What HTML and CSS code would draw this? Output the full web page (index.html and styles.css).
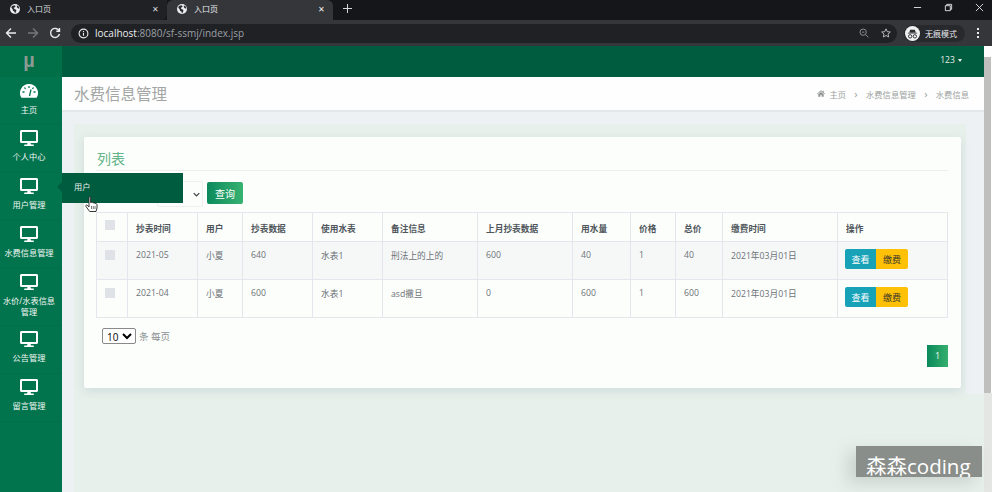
FILE: index.html
```html
<!DOCTYPE html>
<html lang="en">
<head>
    <meta charset="UTF-8">
    <meta name="viewport" content="width=device-width, initial-scale=1.0">
    <title>入口页</title>
    <link rel="stylesheet" href="styles.css">
</head>
<body>

    <svg class="defs" width="0" height="0">
        <symbol id="desktop" viewBox="0 0 576 512">
            <path d="M528 0H48C21.5 0 0 21.5 0 48v320c0 26.5 21.5 48 48 48h192l-16 48h-72c-13.3 0-24 10.7-24 24s10.7 24 24 24h272c13.3 0 24-10.7 24-24s-10.7-24-24-24h-72l-16-48h192c26.5 0 48-21.5 48-48V48c0-26.5-21.5-48-48-48zm-16 352H64V64h448v288z"/>
        </symbol>
        <symbol id="globe" viewBox="0 0 16 16">
            <circle cx="8" cy="8" r="8" fill="#eceff1"/>
            <path d="M3 3l4-1 2 1-1 2-2 1 1 2 3 1 0 3-2 3-1-3-2-1-1-3-2-2zM11 2l3 2 1 3-2 0-2-2z" fill="#2b2c30"/>
        </symbol>
    </svg>

    <!-- browser tabs -->
    <div class="tabstrip">
        <div class="tab">
            <svg class="tab-icon"><use href="#globe"/></svg>
            <span class="tab-title">入口页</span>
            <span class="tab-close">✕</span>
        </div>
        <div class="tab tab-active">
            <svg class="tab-icon"><use href="#globe"/></svg>
            <span class="tab-title">入口页</span>
            <span class="tab-close">✕</span>
        </div>
        <svg class="new-tab" viewBox="0 0 10 10"><path d="M5 0v10M0 5h10"/></svg>
        <div class="win-controls">
            <svg viewBox="0 0 10 10"><path d="M1 5h8"/></svg>
            <svg viewBox="0 0 10 10"><path d="M1.500 3h5.500v5.500h-5.500zM3 3v-1.500h5.500v5.500h-1.500"/></svg>
            <svg viewBox="0 0 10 10"><path d="M1 1l8 8M9 1l-8 8"/></svg>
        </div>
    </div>

    <!-- browser toolbar -->
    <div class="toolbar">
        <svg class="nav-icon" viewBox="0 0 12 12"><path d="M11 6H1.500M6 1.500L1.500 6 6 10.500"/></svg>
        <svg class="nav-icon nav-off" viewBox="0 0 12 12"><path d="M1 6h9.500M6 1.500L10.500 6 6 10.500"/></svg>
        <svg class="nav-icon" viewBox="0 0 12 12"><path d="M10.200 4A4.500 4.500 0 1 0 10.500 7M10.500 1v3.200H7.300"/></svg>
        <div class="omnibox">
            <svg class="info-icon" viewBox="0 0 12 12"><circle cx="6" cy="6" r="4.800"/><path d="M6 5.500v3M6 3.300v1.200"/></svg>
            <span class="url"><b>localhost</b>:8080/sf-ssmj/index.jsp</span>
            <svg class="omni-icon omni-zoom" viewBox="0 0 12 12"><circle cx="5" cy="5" r="3.800"/><path d="M3.500 5h3M8 8l3.300 3.300"/></svg>
            <svg class="omni-icon" viewBox="0 0 12 12"><path d="M6 1l1.500 3.400 3.700.4-2.800 2.400.8 3.600L6 9l-3.200 1.800.8-3.600L.8 4.800l3.700-.4z"/></svg>
        </div>
        <div class="incognito">
            <span class="incognito-avatar">
                <svg viewBox="0 0 16 16"><path d="M4.500 7l1-3h5l1 3zM3 7.300h10v.8H3z" fill="#2b2c30"/><circle cx="5.500" cy="11" r="1.800" fill="none" stroke="#2b2c30"/><circle cx="10.500" cy="11" r="1.800" fill="none" stroke="#2b2c30"/></svg>
            </span>
            <span>无痕模式</span>
        </div>
        <div class="menu-dots"><i></i><i></i><i></i></div>
    </div>

    <div class="app">
        <!-- sidebar -->
        <div class="sidebar">
            <div class="logo">µ</div>
            <a class="side-item side-home">
                <svg class="side-icon gauge" viewBox="0 0 18 14">
                    <path d="M9 0a9 9 0 0 1 7.600 13.800H1.400A9 9 0 0 1 9 0z" fill="#fff"/>
                    <path d="M9 2v2M4.500 3.500l1 1.500M13.500 3.500l-1 1.500M2.500 8h2M13.500 8h2M9.500 12L11 5.500" stroke="#02744d" stroke-width="1.300"/>
                </svg>
                <span>主页</span>
            </a>
            <a class="side-item"><svg class="side-icon"><use href="#desktop"/></svg><span>个人中心</span></a>
            <a class="side-item"><svg class="side-icon"><use href="#desktop"/></svg><span>用户管理</span></a>
            <a class="side-item"><svg class="side-icon"><use href="#desktop"/></svg><span>水费信息管理</span></a>
            <a class="side-item side-tall"><svg class="side-icon"><use href="#desktop"/></svg><span>水价/水表信息管理</span></a>
            <a class="side-item"><svg class="side-icon"><use href="#desktop"/></svg><span>公告管理</span></a>
            <a class="side-item"><svg class="side-icon"><use href="#desktop"/></svg><span>留言管理</span></a>
        </div>

        <div class="main">
            <div class="topbar">
                <span class="user-menu">123 <i class="caret"></i></span>
            </div>

            <div class="title-bar">
                <h1>水费信息管理</h1>
                <div class="breadcrumb">
                    <svg class="home-icon" viewBox="0 0 12 10"><path d="M6 0L0 5.200l.7.800L6 1.500 11.300 6l.7-.8-2-1.700V1H8.500v1.200zM2 6.200V10h3V7h2v3h3V6.200L6 2.800z"/></svg>
                    <span>主页</span>
                    <span class="sep">›</span>
                    <span>水费信息管理</span>
                    <span class="sep">›</span>
                    <span>水费信息</span>
                </div>
            </div>

            <div class="content">
                <div class="card">
                    <h2>列表</h2>
                    <div class="search-row">
                        <div class="fake-select"><svg viewBox="0 0 10 6"><path d="M1 1l4 4 4-4"/></svg></div>
                        <button class="btn-search">查询</button>
                    </div>

                    <table class="data-table">
                        <colgroup>
                            <col class="c-check"><col class="c-wide"><col class="c-user"><col class="c-wide"><col class="c-wide">
                            <col class="c-note"><col class="c-note"><col class="c-water"><col class="c-user"><col class="c-total">
                            <col class="c-date"><col class="c-ops">
                        </colgroup>
                        <thead>
                            <tr>
                                <th><span class="check"></span></th>
                                <th>抄表时间</th>
                                <th>用户</th>
                                <th>抄表数据</th>
                                <th>使用水表</th>
                                <th>备注信息</th>
                                <th>上月抄表数据</th>
                                <th>用水量</th>
                                <th>价格</th>
                                <th>总价</th>
                                <th>缴费时间</th>
                                <th>操作</th>
                            </tr>
                        </thead>
                        <tbody>
                            <tr>
                                <td><span class="check"></span></td>
                                <td>2021-05</td>
                                <td>小夏</td>
                                <td>640</td>
                                <td>水表1</td>
                                <td>刑法上的上的</td>
                                <td>600</td>
                                <td>40</td>
                                <td>1</td>
                                <td>40</td>
                                <td>2021年03月01日</td>
                                <td class="ops"><button class="btn-view">查看</button><button class="btn-pay">缴费</button></td>
                            </tr>
                            <tr>
                                <td><span class="check"></span></td>
                                <td>2021-04</td>
                                <td>小夏</td>
                                <td>600</td>
                                <td>水表1</td>
                                <td>asd撒旦</td>
                                <td>0</td>
                                <td>600</td>
                                <td>1</td>
                                <td>600</td>
                                <td>2021年03月01日</td>
                                <td class="ops"><button class="btn-view">查看</button><button class="btn-pay">缴费</button></td>
                            </tr>
                        </tbody>
                    </table>

                    <div class="page-size">
                        <select><option>10</option></select>
                        <span>条 每页</span>
                    </div>
                    <div class="pager"><a class="page-num">1</a></div>
                </div>
            </div>
        </div>

        <div class="scrollbar"><div class="scroll-arrow"></div><div class="scroll-thumb"></div></div>

        <!-- hover flyout of 用户管理 -->
        <div class="flyout">用户</div>

        <svg class="hand" viewBox="0 0 13 17">
            <path d="M4 1.500c0-1 1.600-1 1.600 0v5l1.400-.3c.4 0 .9.100 1 .6l1.300.1c.5 0 .8.300.9.600 1.200-.2 1.800.4 1.800 1.200v3.300l-1 3.500H4.700L1 10.500c-.7-1 .5-2 1.300-1.200L4 11z" fill="#fff" stroke="#222" stroke-width=".9"/>
            <path d="M6.500 10v3M8.300 10v3M10 10v3" stroke="#222" stroke-width=".6"/>
        </svg>

        <div class="watermark">森森coding</div>
    </div>

</body>
</html>
```

FILE: styles.css
```css
* {
    box-sizing: border-box;
}
html, body {
    margin: 0;
    height: 100%;
}
body {
    width: 992px;
    height: 492px;
    overflow: hidden;
    font-family: "Open Sans", "Noto Sans CJK SC", sans-serif;
    background-color: #e7f0eb;
    background-image: linear-gradient(to right, transparent 975px, #e4e6e3 985px);
}
.defs {
    position: absolute;
}

/* browser tabs */
.tabstrip {
    display: flex;
    align-items: flex-start;
    height: 20px;
    background-color: #15161a;
    color: #d8dadd;
}
.tab {
    display: flex;
    align-items: center;
    width: 167px;
    height: 20px;
    padding: 0 7px 3px 10px;
    background-color: #202124;
    border-radius: 0 0 6px 0;
    font-size: 8px;
}
.tab-active {
    width: 166px;
    background-color: #35363a;
    border-radius: 6px 6px 0 0;
    color: #eceef0;
}
.tab-icon {
    width: 10px;
    height: 10px;
    margin-right: 7px;
}
.tab-title {
    flex: 1;
}
.tab-close {
    font-size: 8px;
    margin-right: 1px;
}
.new-tab {
    width: 9px;
    height: 9px;
    margin: 4px 0 0 10px;
    stroke: #d8dadd;
    stroke-width: 1.1;
}
.win-controls {
    display: flex;
    gap: 22px;
    margin-left: auto;
    padding: 3px 8px 0 0;
}
.win-controls svg {
    width: 9px;
    height: 9px;
    fill: none;
    stroke: #e6e6e6;
    stroke-width: 1;
}

/* browser toolbar */
.toolbar {
    display: flex;
    align-items: center;
    height: 26px;
    padding: 0 0 0 5px;
    background-color: #35363a;
    color: #e8eaed;
}
.nav-icon {
    width: 12px;
    height: 12px;
    margin-right: 10px;
    fill: none;
    stroke: #e8eaed;
    stroke-width: 1.400;
}
.nav-off {
    stroke: #77787c;
}
.omnibox {
    display: flex;
    align-items: center;
    width: 826px;
    height: 19px;
    margin-left: 0;
    padding: 0 6px 0 7px;
    background-color: #202124;
    border-radius: 10px;
}
.info-icon {
    width: 11px;
    height: 11px;
    margin-right: 6px;
    fill: none;
    stroke: #e8eaed;
    stroke-width: 1.200;
}
.url {
    flex: 1;
    font-size: 10px;
    color: #9aa0a6;
}
.url b {
    font-weight: 400;
    color: #eceef0;
}
.omni-icon {
    width: 10px;
    height: 10px;
    margin-left: 12px;
    fill: none;
    stroke: #cfd1d4;
    stroke-width: 1;
}
.omni-zoom {
    stroke: #9aa0a6;
}
.incognito {
    display: flex;
    align-items: center;
    gap: 5px;
    width: 61px;
    height: 17px;
    margin-left: 7px;
    padding-left: 1px;
    background-color: #28292c;
    border-radius: 9px;
    font-size: 8px;
}
.incognito-avatar {
    display: block;
    width: 15px;
    height: 15px;
    border-radius: 50%;
    background-color: #f2f2f2;
}
.incognito-avatar svg {
    display: block;
    width: 15px;
    height: 15px;
}
.menu-dots {
    display: flex;
    flex-direction: column;
    gap: 2px;
    margin-left: 12px;
}
.menu-dots i {
    display: block;
    width: 2px;
    height: 2px;
    background-color: #e8eaed;
}

/* page */
.app {
    position: relative;
    display: flex;
    height: 446px;
}
.sidebar {
    flex: 0 0 62px;
    background-color: #02744d;
    color: #f2f7f4;
    font-size: 8.200px;
}
.logo {
    height: 31px;
    padding-right: 4px;
    background-color: #016f48;
    color: #8b9a92;
    font: bold 20px/29px "Liberation Sans", sans-serif;
    text-align: center;
}
.side-item {
    display: block;
    height: 48px;
    padding: 5px 4px 0 0;
    border-bottom: 1px solid #036f4a;
    text-align: center;
    line-height: 11px;
}
.side-item span {
    display: block;
    margin-top: 5px;
}
.side-tall {
    height: 57px;
}
.side-icon {
    display: block;
    width: 18px;
    height: 16px;
    margin: 0 auto;
    fill: #fff;
}
.gauge {
    height: 14px;
    margin-top: 2px;
    margin-bottom: 6px;
}
.main {
    display: flex;
    flex-direction: column;
    flex: 0 0 921px;
}
.topbar {
    display: flex;
    align-items: center;
    justify-content: flex-end;
    height: 31px;
    padding: 0 22px 5px 0;
    background-color: #005c3f;
    color: #e6efe9;
    font-size: 8.500px;
}
.caret {
    display: inline-block;
    margin-left: 1px;
    vertical-align: middle;
    border-top: 3px solid #e6efe9;
    border-left: 2.500px solid transparent;
    border-right: 2.500px solid transparent;
}
.title-bar {
    display: flex;
    align-items: center;
    justify-content: space-between;
    height: 35px;
    padding: 0 15px 0 12px;
    background-color: #fdfefd;
    border-bottom: 2px solid #e4e8ea;
}
h1 {
    margin: 0;
    font-size: 15.500px;
    font-weight: 400;
    color: #a3a5a4;
}
.breadcrumb {
    display: flex;
    align-items: center;
    font-size: 8.300px;
    color: #9c9e9d;
}
.home-icon {
    width: 8px;
    height: 7px;
    margin-right: 4px;
    fill: #8e908f;
}
.sep {
    width: 20px;
    font-size: 11px;
    line-height: 11px;
    text-align: center;
}
.content {
    flex: 1;
    padding: 25px 23px 0 22px;
    background-color: #e7f0eb;
    background-image:
        linear-gradient(#edf1f4, #edf1f4),
        linear-gradient(#edf1f4, #edf1f4),
        linear-gradient(#edf1f4, #edf1f4);
    background-repeat: no-repeat;
    background-size: 12px 100%, 18px 282px, 100% 12px;
    background-position: left top, right top, left top;
}

/* card */
.card {
    height: 251px;
    padding: 12px 13px 0 12px;
    background-color: #fcfefc;
    border-radius: 2px;
    box-shadow: 0 3px 10px rgba(150, 175, 190, 0.3);
}
h2 {
    margin: 0;
    height: 22px;
    padding-left: 1px;
    border-bottom: 1px solid #eceef0;
    font-size: 14px;
    font-weight: 400;
    line-height: 19px;
    color: #62b489;
}
.search-row {
    display: flex;
    align-items: flex-start;
    height: 30px;
    margin-top: 11px;
    padding-left: 61px;
}
.fake-select {
    display: flex;
    align-items: center;
    justify-content: flex-end;
    width: 46px;
    height: 26px;
    padding-right: 2px;
    margin-top: -1px;
    border: 1px solid #eef0f0;
    border-radius: 2px;
}
.fake-select svg {
    width: 7px;
    height: 5px;
    fill: none;
    stroke: #3d4245;
    stroke-width: 1.800;
}
.btn-search {
    width: 36px;
    height: 22px;
    margin-left: 4px;
    padding: 0;
    border: none;
    border-radius: 2px;
    background: linear-gradient(to right, #0c8a5c, #38b271);
    color: #fff;
    font: 10px "Open Sans", "Noto Sans CJK SC", sans-serif;
}

/* table */
.data-table {
    width: 851px;
    table-layout: fixed;
    border-collapse: collapse;
    font-size: 8.700px;
    color: #6c7277;
}
.c-check { width: 31px; }
.c-wide { width: 70px; }
.c-user { width: 45px; }
.c-note { width: 95px; }
.c-water { width: 58px; }
.c-total { width: 47px; }
.c-date { width: 115px; }
.c-ops { width: 110px; }
.data-table th, .data-table td {
    padding: 7px 8px 0;
    border: 1px solid #e3e6ec;
    text-align: left;
    vertical-align: top;
    white-space: nowrap;
}
.data-table th {
    height: 29px;
    padding-top: 9px;
    font-weight: 700;
    color: #4f565b;
}
.data-table td {
    height: 38px;
}
.data-table tbody tr:first-child {
    background-color: #f6f8f8;
}
.check {
    display: block;
    width: 10px;
    height: 10px;
    background-color: #dfe3e7;
}
.data-table th:first-child .check {
    margin-top: -2px;
}
.data-table td .check {
    margin-top: 1px;
}
.data-table td.ops {
    padding-left: 7px;
}
.btn-view, .btn-pay {
    height: 20px;
    padding: 0;
    border: none;
    font: 9px "Open Sans", "Noto Sans CJK SC", sans-serif;
}
.btn-view {
    width: 31px;
    background-color: #17a2b8;
    color: #fff;
    border-radius: 2px 0 0 2px;
}
.btn-pay {
    width: 32px;
    background-color: #ffc107;
    color: #3a3a2a;
    border-radius: 0 2px 2px 0;
}

/* table footer */
.page-size {
    display: flex;
    align-items: center;
    gap: 3px;
    margin: 10px 0 0 6px;
    font-size: 9.500px;
    color: #8c9094;
}
.page-size select {
    width: 34px;
    height: 16px;
    padding: 0;
    font: 10px/14px "Open Sans", sans-serif;
    background-color: #fff;
    border: 1px solid #8a8a8a;
    border-radius: 2px;
}
.pager {
    display: flex;
    justify-content: flex-end;
    margin-top: 1px;
}
.page-num {
    display: block;
    width: 21px;
    height: 22px;
    background: linear-gradient(to right, #0a8a5b, #36b06f);
    color: #f2f7f4;
    font-size: 9px;
    line-height: 22px;
    text-align: center;
}

/* scrollbar column */
.scrollbar {
    flex: 0 0 9px;
    height: 347px;
    padding-right: 2px;
    background-color: #fdfefd;
}
.scroll-arrow {
    height: 11px;
}
.scroll-thumb {
    height: 336px;
    background-color: #bfc0bc;
}

/* overlays */
.flyout {
    position: absolute;
    left: 62px;
    top: 127px;
    width: 121px;
    height: 30px;
    padding-left: 12px;
    background-color: #005c3f;
    color: #e8f0ec;
    font-size: 8.200px;
    line-height: 28px;
}
.flyout::before {
    content: "";
    position: absolute;
    left: -5px;
    top: 9px;
    border-top: 5px solid transparent;
    border-bottom: 5px solid transparent;
    border-right: 5px solid #005c3f;
}
.hand {
    position: absolute;
    left: 85px;
    top: 150px;
    width: 13px;
    height: 17px;
}
.watermark {
    position: absolute;
    left: 856px;
    top: 400px;
    width: 126px;
    height: 31px;
    padding-left: 10px;
    overflow: hidden;
    background-color: #8a8e8a;
    box-shadow: -8px 6px 16px rgba(150, 155, 150, 0.35);
    color: #fff;
    font-size: 20.500px;
    line-height: 41px;
    white-space: nowrap;
}
```
